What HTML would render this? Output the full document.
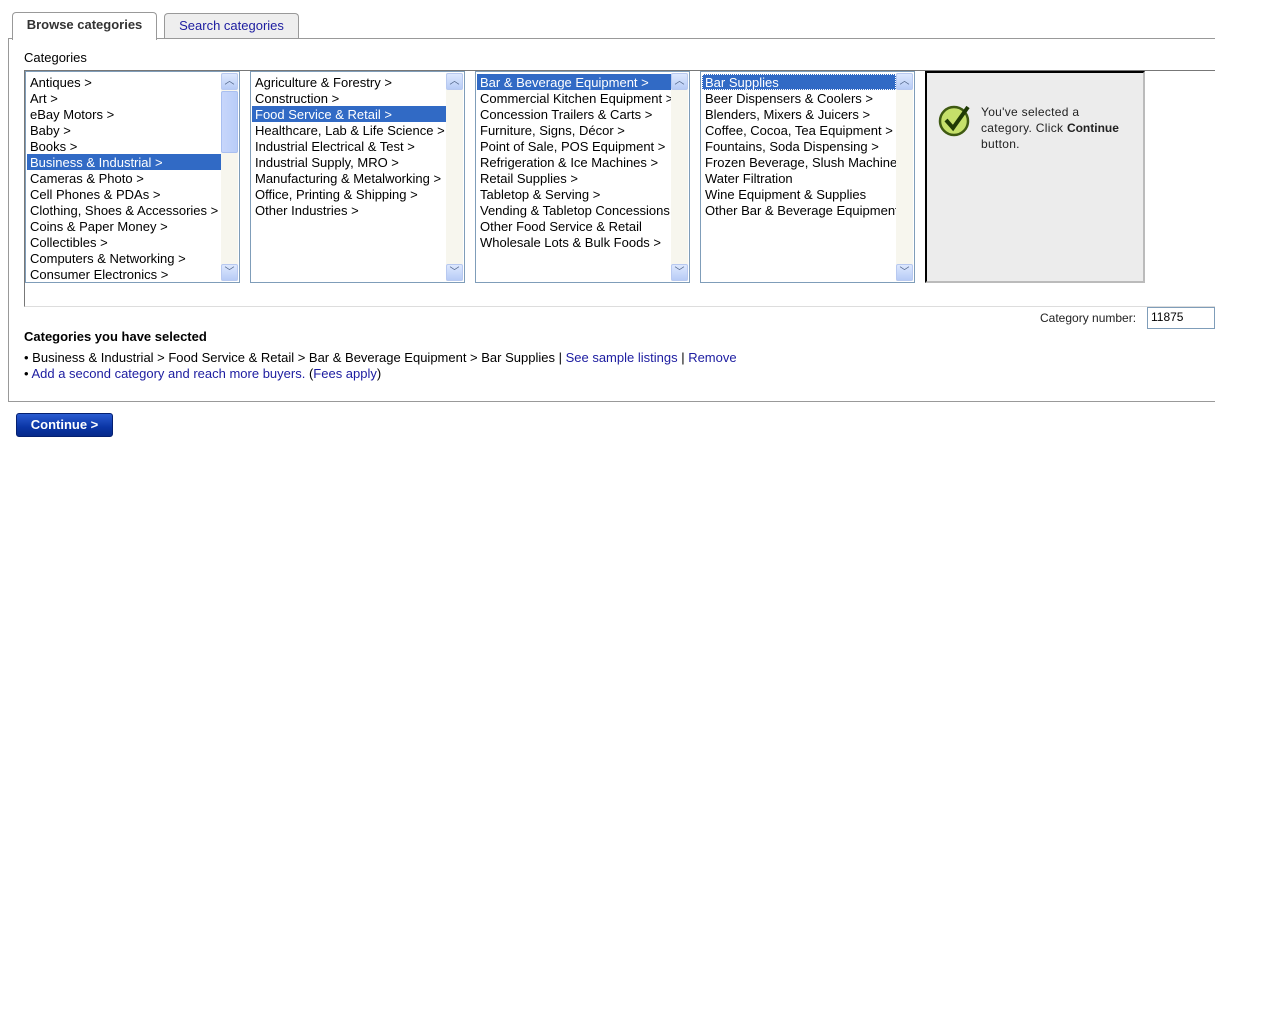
<!DOCTYPE html>
<html><head><meta charset="utf-8"><style>
*{margin:0;padding:0;box-sizing:border-box}
body{width:1280px;height:1024px;background:#fff;font-family:"Liberation Sans",Arial,sans-serif;font-size:13px;color:#000;position:relative;overflow:hidden}
.a{position:absolute}
.tab{position:absolute;border:1px solid #999;border-bottom:none;border-radius:4px 4px 0 0;font-size:13px;text-align:center;line-height:24px}
.box{position:absolute;top:71px;width:215px;height:212px;border:1px solid #7f9db9;background:#fff;overflow:hidden}
.box .it{position:absolute;left:1px;height:16px;line-height:17px;padding-left:3px;white-space:nowrap;font-size:13px}
.box .sel{background:#316ac5;color:#fff}
.sb{position:absolute;right:1px;top:1px;width:17px;height:208px;background:#f7f6ee}
.btn{position:absolute;left:0;width:17px;height:17px;background:linear-gradient(#dde8fe,#b7cbf6);border:1px solid #b8c9f0;border-radius:2px;color:#4d6185;font-size:10px;text-align:center;line-height:15px}
.thumb{position:absolute;left:0;top:18px;width:17px;height:62px;background:linear-gradient(90deg,#c7d6fb,#b9cdf8);border:1px solid #a9bff0;border-radius:2px}
a{color:#1c1ca0;text-decoration:none}
</style></head><body>
<div class="tab" style="left:12px;top:12px;width:145px;height:28px;background:#fff;font-weight:bold;color:#333;z-index:2">Browse categories</div>
<div class="tab" style="left:164px;top:13px;width:135px;height:25px;background:#eee;color:#1c1ca0">Search categories</div>
<div class="a" style="left:8px;top:38px;width:1207px;height:364px;border-left:1px solid #999;border-top:1px solid #999;border-bottom:1px solid #999"></div>
<div class="a" style="left:24px;top:50px">Categories</div>
<div class="a" style="left:24px;top:70px;width:1191px;height:237px;border-left:1px solid #777;border-top:1px solid #777;border-bottom:1px solid #ddd"></div>

<div class="box" style="left:25px">
<div class="it" style="top:2px">Antiques &gt;</div>
<div class="it" style="top:18px">Art &gt;</div>
<div class="it" style="top:34px">eBay Motors &gt;</div>
<div class="it" style="top:50px">Baby &gt;</div>
<div class="it" style="top:66px">Books &gt;</div>
<div class="it sel" style="top:82px;width:194px">Business &amp; Industrial &gt;</div>
<div class="it" style="top:98px">Cameras &amp; Photo &gt;</div>
<div class="it" style="top:114px">Cell Phones &amp; PDAs &gt;</div>
<div class="it" style="top:130px">Clothing, Shoes &amp; Accessories &gt;</div>
<div class="it" style="top:146px">Coins &amp; Paper Money &gt;</div>
<div class="it" style="top:162px">Collectibles &gt;</div>
<div class="it" style="top:178px">Computers &amp; Networking &gt;</div>
<div class="it" style="top:194px">Consumer Electronics &gt;</div>
<div class="sb"><div class="btn" style="top:0">︿</div><div class="thumb"></div><div class="btn" style="bottom:0">﹀</div></div>
</div>

<div class="box" style="left:250px">
<div class="it" style="top:2px">Agriculture &amp; Forestry &gt;</div>
<div class="it" style="top:18px">Construction &gt;</div>
<div class="it sel" style="top:34px;width:194px">Food Service &amp; Retail &gt;</div>
<div class="it" style="top:50px">Healthcare, Lab &amp; Life Science &gt;</div>
<div class="it" style="top:66px">Industrial Electrical &amp; Test &gt;</div>
<div class="it" style="top:82px">Industrial Supply, MRO &gt;</div>
<div class="it" style="top:98px">Manufacturing &amp; Metalworking &gt;</div>
<div class="it" style="top:114px">Office, Printing &amp; Shipping &gt;</div>
<div class="it" style="top:130px">Other Industries &gt;</div>
<div class="sb"><div class="btn" style="top:0">︿</div><div class="btn" style="bottom:0">﹀</div></div>
</div>

<div class="box" style="left:475px">
<div class="it sel" style="top:2px;width:194px">Bar &amp; Beverage Equipment &gt;</div>
<div class="it" style="top:18px">Commercial Kitchen Equipment &gt;</div>
<div class="it" style="top:34px">Concession Trailers &amp; Carts &gt;</div>
<div class="it" style="top:50px">Furniture, Signs, Décor &gt;</div>
<div class="it" style="top:66px">Point of Sale, POS Equipment &gt;</div>
<div class="it" style="top:82px">Refrigeration &amp; Ice Machines &gt;</div>
<div class="it" style="top:98px">Retail Supplies &gt;</div>
<div class="it" style="top:114px">Tabletop &amp; Serving &gt;</div>
<div class="it" style="top:130px">Vending &amp; Tabletop Concessions</div>
<div class="it" style="top:146px">Other Food Service &amp; Retail</div>
<div class="it" style="top:162px">Wholesale Lots &amp; Bulk Foods &gt;</div>
<div class="sb"><div class="btn" style="top:0">︿</div><div class="btn" style="bottom:0">﹀</div></div>
</div>

<div class="box" style="left:700px">
<div class="it sel" style="top:2px;width:194px;outline:1px dotted #fff;outline-offset:-1px">Bar Supplies</div>
<div class="it" style="top:18px">Beer Dispensers &amp; Coolers &gt;</div>
<div class="it" style="top:34px">Blenders, Mixers &amp; Juicers &gt;</div>
<div class="it" style="top:50px">Coffee, Cocoa, Tea Equipment &gt;</div>
<div class="it" style="top:66px">Fountains, Soda Dispensing &gt;</div>
<div class="it" style="top:82px">Frozen Beverage, Slush Machines</div>
<div class="it" style="top:98px">Water Filtration</div>
<div class="it" style="top:114px">Wine Equipment &amp; Supplies</div>
<div class="it" style="top:130px">Other Bar &amp; Beverage Equipment</div>
<div class="sb"><div class="btn" style="top:0">︿</div><div class="btn" style="bottom:0">﹀</div></div>
</div>

<div class="a" style="left:925px;top:71px;width:220px;height:212px;background:#ececec;border-left:2px solid #000;border-top:2px solid #000;border-right:2px solid #bbb;border-bottom:2px solid #bbb">
<svg class="a" style="left:11px;top:30px" width="34" height="34" viewBox="0 0 34 34"><circle cx="16" cy="18" r="14" fill="#c5e06a" stroke="#3f5a12" stroke-width="2.5"/><path d="M8 17 L15 25 L30 4" fill="none" stroke="#1f3a05" stroke-width="4"/></svg>
<div class="a" style="left:54px;top:31px;width:150px;font-size:12px;line-height:16px;color:#222;letter-spacing:0.3px">You've selected a<br>category. Click <b style="letter-spacing:0">Continue</b><br>button.</div>
</div>

<div class="a" style="left:1040px;top:311px;font-size:12px;color:#222">Category number:</div>
<div class="a" style="left:1147px;top:307px;width:68px;height:22px;border:1px solid #7f9db9;padding:2px 3px;font-size:12px">11875</div>

<div class="a" style="left:24px;top:329px;font-weight:bold">Categories you have selected</div>
<div class="a" style="left:24px;top:350px;white-space:nowrap">• Business &amp; Industrial &gt; Food Service &amp; Retail &gt; Bar &amp; Beverage Equipment &gt; Bar Supplies | <a>See sample listings</a> | <a>Remove</a></div>
<div class="a" style="left:24px;top:366px;white-space:nowrap">• <a>Add a second category and reach more buyers.</a> (<a>Fees apply</a>)</div>

<div class="a" style="left:16px;top:413px;width:97px;height:24px;background:linear-gradient(#2a5bd0,#0a35a5 60%,#072a8a);border:1px solid #052070;border-radius:3px;color:#fff;font-weight:bold;text-align:center;line-height:22px">Continue &gt;</div>
</body></html>
